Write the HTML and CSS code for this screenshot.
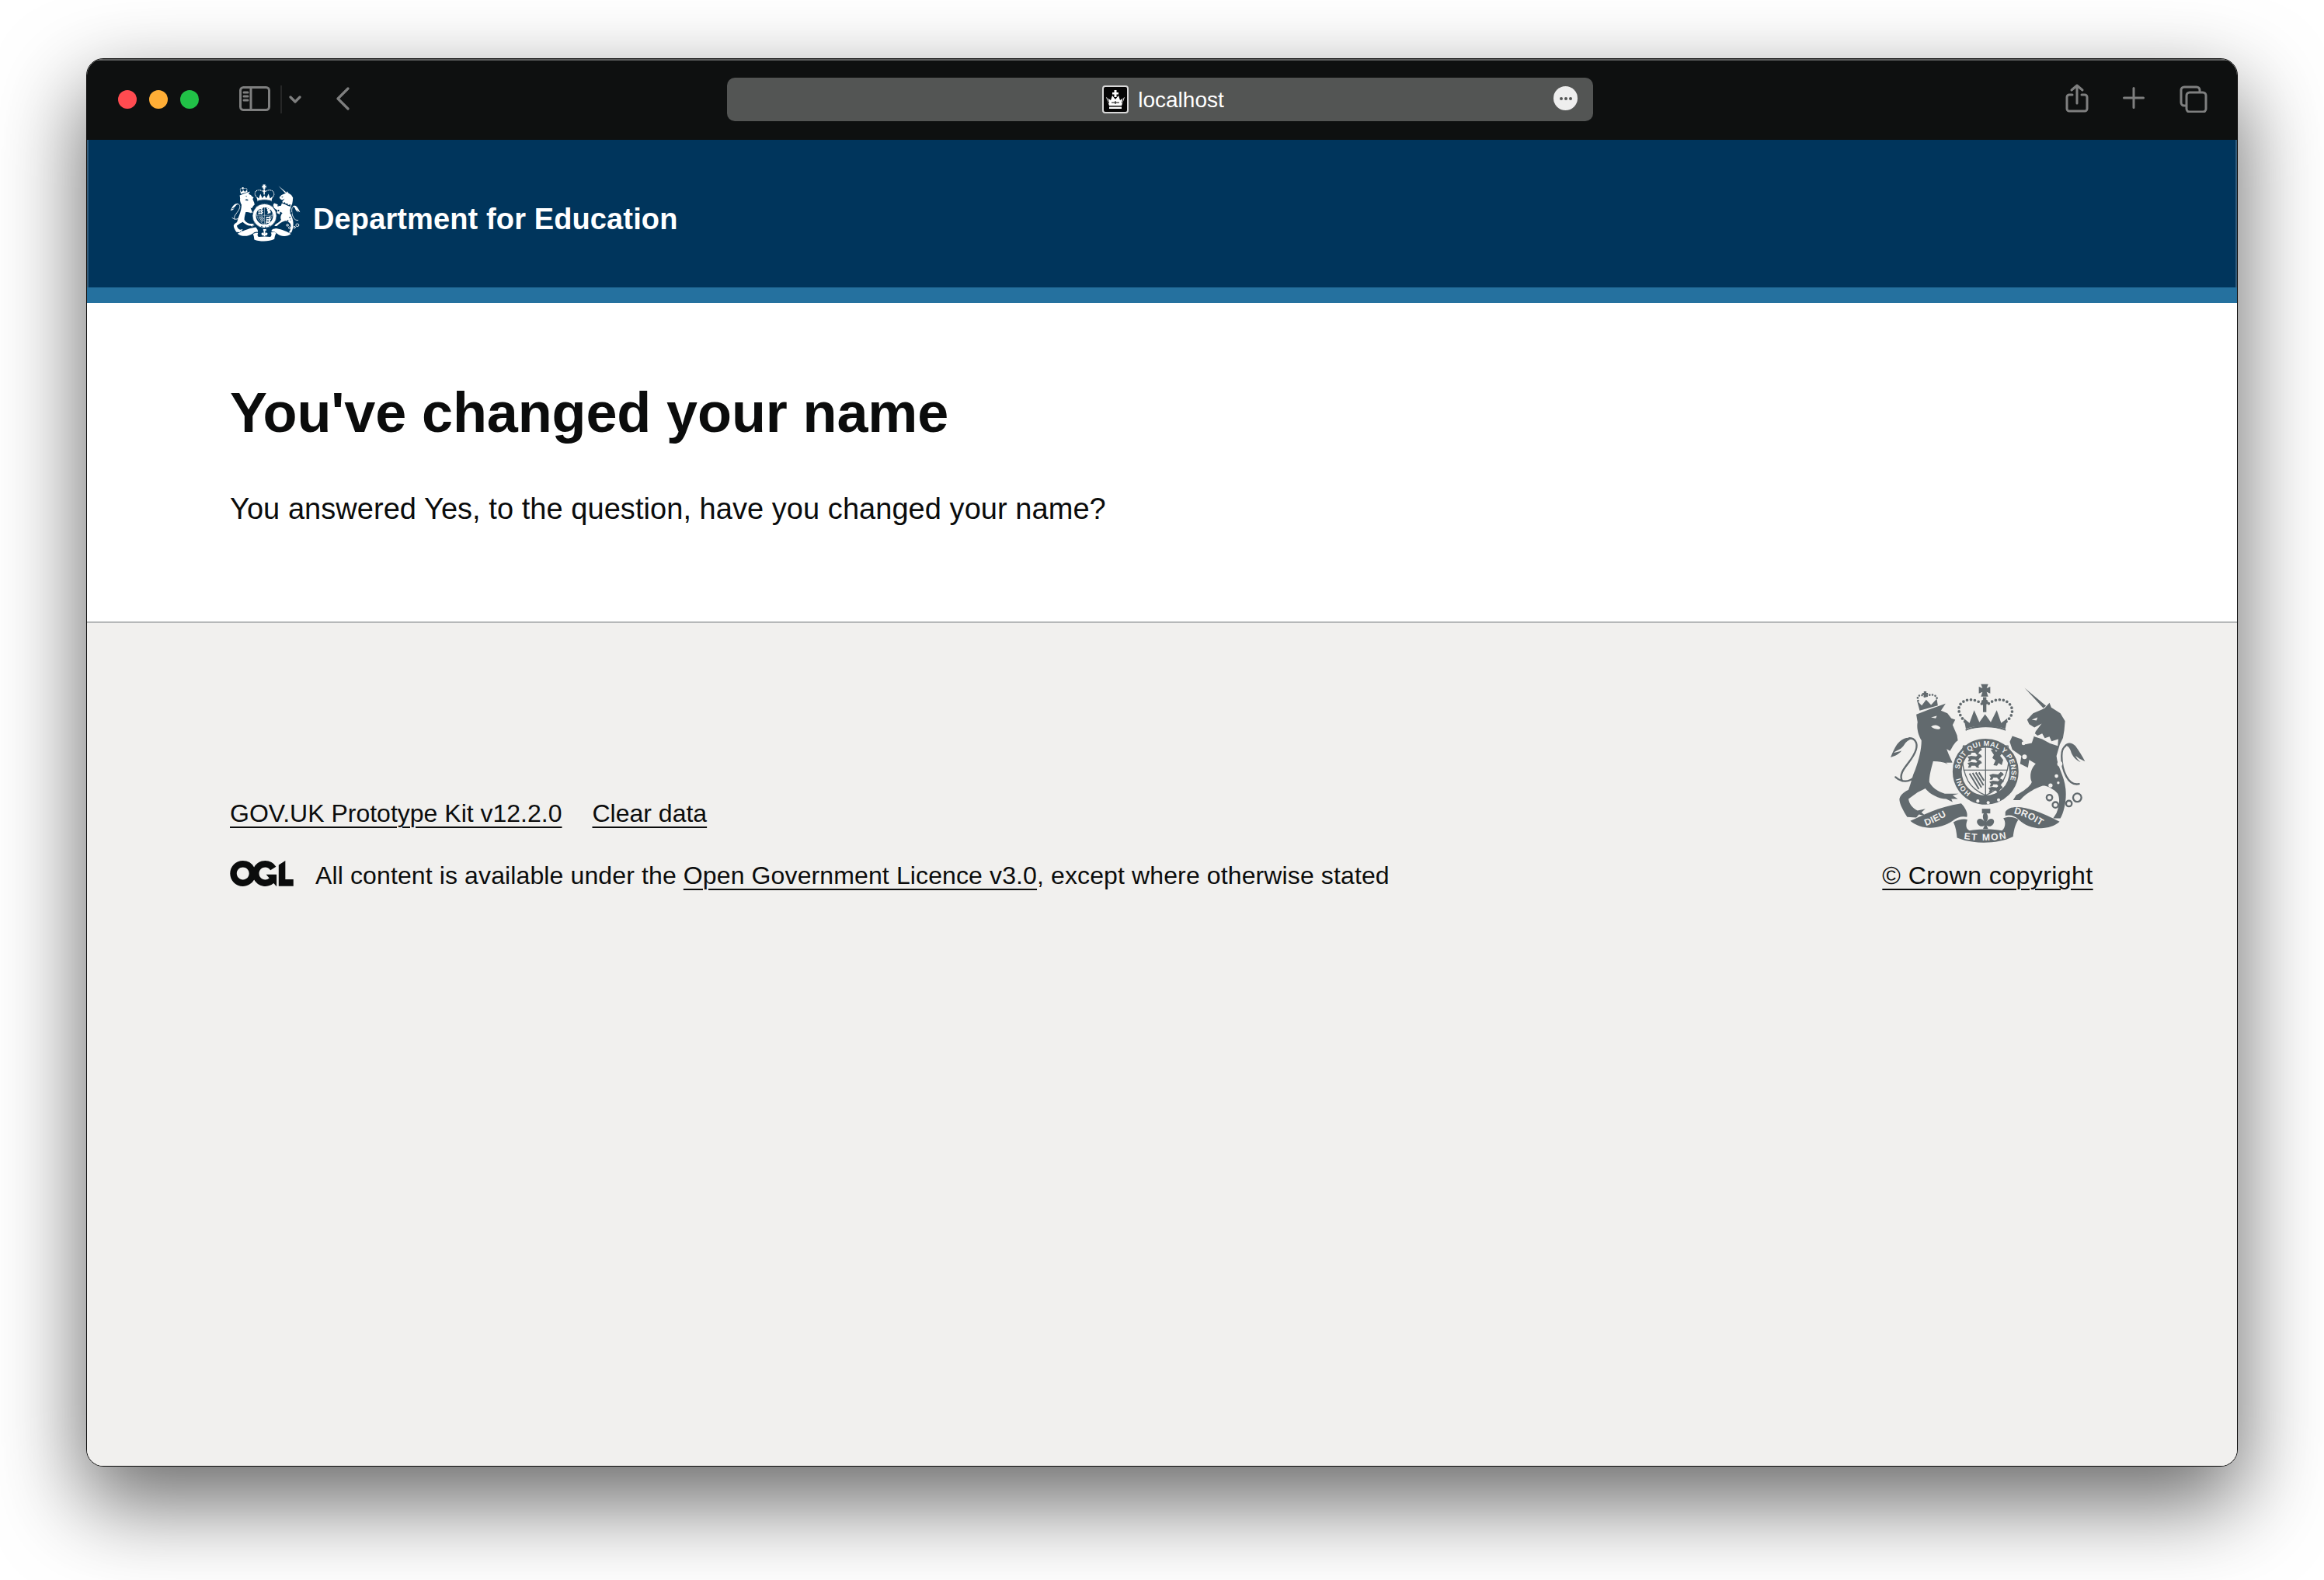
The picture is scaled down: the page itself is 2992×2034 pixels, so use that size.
FILE: index.html
```html
<!DOCTYPE html>
<html lang="en">
<head>
<meta charset="utf-8">
<title>You've changed your name</title>
<link rel="stylesheet" href="styles.css">
</head>
<body>
<svg class="defs" aria-hidden="true">
  <defs>
    <path id="arc-garter" d="M372 396 A100 100 0 1 1 522 492"/>
    <path id="arc-honi" d="M415 487 A100 100 0 0 1 373 422"/>
    <path id="arc-dieu" d="M242 614 C275 602 310 582 347 560"/>
    <path id="arc-et" d="M388 664 C440 672 505 672 555 662"/>
    <path id="arc-droit" d="M580 566 C620 575 660 595 700 624"/>
    <path id="passant" d="M0 6 L14 2 L34 4 L44 -6 L52 -2 L56 6 L48 10 L42 18 L46 24 L36 24 L30 16 L16 16 L12 24 L2 24 L6 14 Z"/>
    <symbol id="crest" viewBox="100 60 760 625">
      <g class="c-ink">
        <path d="M205 185 L255 165 L318 143 L300 170 L325 180 L340 200 L355 205 L345 225 L362 265 L365 285 C350 295 345 310 335 325 L322 318 C332 345 345 375 360 395 L378 420 L372 432 L350 425 L345 395 C330 375 315 365 270 365 C262 395 255 420 255 445 C265 465 285 480 315 490 L368 490 L345 497 L365 510 L340 510 L345 522 L320 510 C290 510 255 490 240 470 L210 485 L175 510 C178 530 190 545 210 555 L240 548 L225 562 L240 575 L215 570 L205 582 L170 580 C155 555 140 530 140 510 C145 490 165 480 175 475 C185 450 190 420 200 400 C215 360 225 320 225 285 C215 270 205 240 210 215 Z"/>
        <path d="M106 350 C118 322 128 300 142 288 C155 276 175 270 190 278 C175 282 165 290 158 302 C150 318 130 322 118 332 C130 330 140 328 148 324 C140 338 122 345 106 350 Z"/>
        <path d="M218 170 L208 132 L226 150 L243 128 L262 148 L284 124 L288 150 Z"/>
        <path d="M234 96 H244 V102 H250 V110 H244 V118 H234 V110 H228 V102 H234 Z"/>
        <path d="M622 82 L705 152 L694 160 Z"/>
        <path d="M700 160 L718 140 L725 158 L760 180 L778 210 L775 245 L770 275 L758 300 L745 345 C750 390 775 420 780 470 C785 510 775 560 760 585 L732 585 L745 565 C755 540 760 510 750 490 C735 470 700 455 690 460 C660 470 625 490 605 515 L578 515 L590 495 C620 480 645 460 650 445 C640 425 645 395 665 375 L640 360 L635 390 L605 375 L610 345 L575 320 L565 290 L575 268 L610 280 L625 300 L650 295 L665 250 L688 220 L660 235 L640 222 L632 205 L655 180 L690 165 Z"/>
        <path d="M855 366 C838 358 826 350 818 344 C825 356 830 362 838 368 C822 362 805 345 800 325 C795 310 785 302 775 306 C785 290 805 292 818 306 C830 322 845 345 855 366 Z"/>
        <path d="M454 68 H482 L476 84 L490 78 V104 L476 98 L482 116 H454 L460 98 L446 104 V78 L460 84 Z"/>
        <path d="M462 118 H475 V128 L481 132 V142 L475 146 V176 H462 V146 L456 142 V132 L462 128 Z"/>
        <path d="M388 200 L410 218 L428 168 L448 215 L470 184 L492 215 L515 168 L532 218 L556 200 L548 240 C510 225 430 225 396 240 Z"/>
      </g>
      <g class="c-line">
        <path class="c-dots" d="M392 212 C372 190 358 160 380 140 C405 118 445 128 466 152"/>
        <path class="c-dots" d="M552 212 C578 190 582 160 560 140 C535 118 495 128 474 152"/>
        <path class="c-dots c-dots-small" d="M212 132 C204 110 226 104 240 118 C256 102 290 108 284 130"/>
        <path d="M125 426 C150 448 178 446 202 424"/>
        <path d="M150 440 C132 400 190 370 204 320 C212 292 198 276 178 276"/>
        <path d="M832 452 C790 462 765 400 765 345 C765 325 770 312 780 306"/>
        <circle cx="718" cy="505" r="11"/>
        <circle cx="741" cy="533" r="11"/>
        <circle cx="793" cy="528" r="11"/>
        <circle cx="825" cy="505" r="16"/>
        <path d="M398 244 C440 226 505 226 546 244"/>
      </g>
      <g class="c-bg">
        <path d="M398 246 C440 232 505 232 546 246 L540 260 C500 248 445 248 405 260 Z"/>
        <circle cx="758" cy="375" r="10"/>
        <circle cx="722" cy="458" r="8"/>
        <circle cx="745" cy="422" r="7"/>
        <circle cx="752" cy="448" r="5"/>
        <circle cx="636" cy="265" r="10"/>
        <circle cx="622" cy="348" r="9"/>
        <circle cx="618" cy="296" r="7"/>
        <path d="M262 232 C272 222 290 224 298 236 C296 244 278 244 262 232 Z"/>
        <path d="M262 196 L284 190 L280 200 Z"/>
        <path d="M650 205 L672 196 L668 208 Z"/>
        <path d="M658 254 L672 266 L690 258 L700 276 L718 270 L726 288 L752 280 L750 306 L720 296 L690 280 L660 270 Z"/>
        <path d="M320 370 L360 370 L380 425 L345 420 C340 400 335 385 320 370 Z"/>
      </g>
      <circle class="c-ring" cx="472" cy="405" r="130"/>
      <g class="c-ink">
        <path d="M182 595 C225 575 290 540 378 527 C395 545 405 565 400 580 C385 575 360 580 345 595 C300 625 230 635 182 595 Z"/>
        <path d="M348 600 C365 590 390 585 402 590 C395 610 395 625 410 632 C450 625 500 625 535 632 C550 620 550 595 540 585 C560 575 585 580 598 590 C585 610 580 635 578 655 C520 685 420 685 362 660 C360 640 358 620 348 600 Z"/>
        <path d="M548 560 C570 525 650 540 757 598 C715 635 640 630 600 590 C585 575 565 570 548 575 Z"/>
        <path d="M458 548 H490 V566 H458 Z"/>
        <path d="M470 560 C486 572 482 590 474 600 C492 574 512 590 502 606 C495 618 482 618 476 612 L482 626 H462 L468 612 C462 618 448 618 441 606 C432 590 452 574 470 600 C462 590 456 572 470 560 Z"/>
      </g>
      <g class="c-bg">
        <circle cx="472" cy="405" r="92"/>
        <circle cx="442" cy="518" r="6"/>
        <circle cx="482" cy="524" r="6"/>
        <circle cx="522" cy="514" r="6"/>
      </g>
      <path class="c-cross" d="M472 306 V496 M386 399 H558 M386 306 H558 C566 350 560 400 540 440 C525 465 500 485 472 496 C444 485 419 465 404 440 C384 400 378 350 386 306 Z"/>
      <g class="c-ink">
        <use href="#passant" x="402" y="316"/>
        <use href="#passant" x="402" y="342"/>
        <use href="#passant" x="402" y="366"/>
        <use href="#passant" x="486" y="412"/>
        <use href="#passant" x="486" y="438"/>
        <use href="#passant" x="482" y="462" class="c-tiny"/>
        <path d="M492 322 L506 316 L512 328 L526 322 L536 334 L528 344 L540 360 L534 380 L522 372 L516 382 L502 380 L510 362 L498 352 L504 340 Z"/>
      </g>
      <path class="c-harp" d="M410 412 L446 472 M422 410 L456 466 M434 408 L464 458 M446 408 L466 440"/>
      <g class="c-text">
        <text class="c-garter"><textPath href="#arc-garter">SOIT QUI MAL Y PENSE</textPath></text>
        <text class="c-garter"><textPath href="#arc-honi">HONI</textPath></text>
        <text class="c-motto"><textPath href="#arc-dieu">DIEU</textPath></text>
        <text class="c-motto c-motto-wide"><textPath href="#arc-et">ET MON</textPath></text>
        <text class="c-motto"><textPath href="#arc-droit">DROIT</textPath></text>
      </g>
    </symbol>
  </defs>
</svg>

<div class="window">
  <div class="titlebar">
    <div class="tb-left">
      <span class="light light-red"></span>
      <span class="light light-yellow"></span>
      <span class="light light-green"></span>
      <svg class="tb-icon ic-sidebar" viewBox="0 0 40 32"><rect x="1.5" y="1.5" width="37" height="29" rx="4"/><path d="M15 2V30M6 8H11M6 13H11M6 18H11"/></svg>
      <span class="tb-sep"></span>
      <svg class="tb-icon ic-chevron" viewBox="0 0 16 12"><path d="M2 3L8 9L14 3"/></svg>
      <svg class="tb-icon ic-back" viewBox="0 0 18 30"><path d="M16 2L3 15L16 28"/></svg>
    </div>
    <div class="addressbar">
      <svg class="favicon" viewBox="0 0 34 36">
        <rect class="fav-box" x="1" y="1" width="32" height="34" rx="3"/>
        <path class="fav-crown" d="M9 26 L5 15 L11 19 L13 13 L17 18 L21 13 L23 19 L29 15 L25 26 Z"/>
        <path class="fav-crown" d="M15.500 6H18.500V9H21V11.500H18.500V15H15.500V11.500H13V9H15.500Z"/>
        <rect class="fav-crown" x="9" y="27.500" width="16" height="2.500"/>
        <path class="fav-dots" d="M7 16L8.500 23M17 20V24M27 16L25.500 23M12 22H22"/>
      </svg>
      <span class="address-text">localhost</span>
      <span class="addr-more"><i></i><i></i><i></i></span>
    </div>
    <div class="tb-right">
      <svg class="tb-icon ic-share" viewBox="0 0 30 37"><path d="M9 14H5A3 3 0 0 0 2 17V32A3 3 0 0 0 5 35H25A3 3 0 0 0 28 32V17A3 3 0 0 0 25 14H21M15 25V2M8 8L15 2L22 8"/></svg>
      <svg class="tb-icon ic-plus" viewBox="0 0 28 28"><path d="M14 1.500V26.500M1.500 14H26.500"/></svg>
      <svg class="tb-icon ic-tabs" viewBox="0 0 36 35"><path d="M8 26H6A4 4 0 0 1 2 22V6A4 4 0 0 1 6 2H22A4 4 0 0 1 26 6V8"/><rect x="9" y="9" width="25" height="25" rx="4"/></svg>
    </div>
  </div>

  <header class="site-header">
    <div class="container header-inner">
      <svg class="crest crest-small" aria-hidden="true"><use href="#crest"/></svg>
      <span class="org-name">Department for Education</span>
    </div>
  </header>

  <main class="content">
    <div class="container">
      <h1 class="page-title">You've changed your name</h1>
      <p class="body-text">You answered Yes, to the question, have you changed your name?</p>
    </div>
  </main>

  <footer class="site-footer">
    <div class="container footer-inner">
      <div class="footer-meta">
        <ul class="footer-links">
          <li><a href="#">GOV.UK Prototype Kit v12.2.0</a></li>
          <li><a href="#">Clear data</a></li>
        </ul>
        <div class="licence">
          <svg class="ogl" viewBox="0 0 483.2 195.7" aria-hidden="true"><path d="M421.5 142.8V.1l-50.7 32.3v161.1h112.4v-50.7zm-122.3-9.6A47.12 47.12 0 0 1 221 97.8c0-26 21.1-47.1 47.1-47.1 16.7 0 31.4 8.7 39.7 21.8l42.7-27.2A97.63 97.63 0 0 0 268.1 0c-36.5 0-68.3 20.1-85.1 49.7A98 98 0 0 0 97.8 0C43.9 0 0 43.9 0 97.8s43.9 97.8 97.8 97.8c36.5 0 68.3-20.1 85.1-49.7a97.76 97.76 0 0 0 149.6 25.4l19.4 22.2h3v-87.8h-80l24.3 27.5zM97.8 145c-26 0-47.1-21.1-47.1-47.1s21.1-47.1 47.1-47.1 47.2 21 47.2 47S123.800 145 97.8 145"/></svg>
          <span class="licence-text">All content is available under the <a href="#">Open Government Licence v3.0</a>, except where otherwise stated</span>
        </div>
      </div>
      <div class="footer-copyright">
        <svg class="crest crest-large" aria-hidden="true"><use href="#crest"/></svg>
        <a href="#">© Crown copyright</a>
      </div>
    </div>
  </footer>
</div>
</body>
</html>
```

FILE: styles.css
```css
* { box-sizing: border-box; }
html, body { margin: 0; height: 100%; }
body {
  width: 2992px;
  height: 2034px;
  padding: 75px 111px 146px;
  background: #fff;
  overflow: hidden;
  font-family: "Liberation Sans", Arial, sans-serif;
  color: #0b0c0c;
}
.defs { display: block; width: 0; height: 0; position: absolute; }

.window {
  width: 2770px;
  height: 1813px;
  display: flex;
  flex-direction: column;
  border: 1px solid #0a0a0a;
  border-radius: 22px;
  overflow: hidden;
  background: #f1f0ee;
  box-shadow: 0 44px 110px 4px rgba(0, 0, 0, 0.58);
}

/* browser chrome */
.titlebar {
  flex: 0 0 104px;
  display: grid;
  grid-template-columns: 824px 1115px 1fr;
  align-items: center;
  background: #0e1010;
  box-shadow: inset 0 2px 0 rgba(255, 255, 255, 0.32);
}
.tb-left { display: flex; align-items: center; padding-left: 40px; }
.light { width: 24px; height: 24px; border-radius: 50%; margin-right: 16px; }
.light-red { background: #ff4b50; }
.light-yellow { background: #ffae36; }
.light-green { background: #21c147; margin-right: 0; }
.tb-icon { display: block; fill: none; stroke: #7e7f7f; stroke-linecap: round; stroke-linejoin: round; }
.ic-sidebar { width: 40px; height: 32px; margin-left: 52px; stroke-width: 3; margin-top: -2px; }
.tb-sep { width: 2px; height: 36px; margin-left: 13px; background: #262727; }
.ic-chevron { width: 16px; height: 12px; margin-left: 9px; stroke-width: 3.2; }
.ic-back { width: 18px; height: 30px; margin-left: 44px; stroke-width: 3.2; margin-top: -2px; }
.addressbar {
  position: relative;
  height: 56px;
  display: flex;
  align-items: center;
  justify-content: center;
  gap: 12px;
  padding-left: 8px;
  border-radius: 10px;
  background: #535554;
  color: #fff;
}
.favicon { width: 34px; height: 36px; display: block; }
.fav-box { fill: #050505; stroke: #d8d8d8; stroke-width: 2; }
.fav-crown { fill: #fff; }
.fav-dots { fill: none; stroke: #050505; stroke-width: 1; }
.address-text { font-size: 28px; line-height: 36px; padding-top: 1px; }
.addr-more {
  position: absolute;
  right: 20px;
  top: 11px;
  width: 31px;
  height: 31px;
  display: flex;
  align-items: center;
  justify-content: center;
  gap: 2px;
  border-radius: 50%;
  background: #eeeeee;
}
.addr-more i { width: 4px; height: 4px; border-radius: 50%; background: #535554; }
.tb-right { display: flex; align-items: center; justify-content: flex-end; padding-right: 38px; }
.ic-share { width: 30px; height: 37px; stroke-width: 3; margin-top: -4px; }
.ic-plus { width: 28px; height: 28px; margin-left: 44px; stroke-width: 3; margin-top: -4px; }
.ic-tabs { width: 36px; height: 35px; margin-left: 45px; stroke-width: 3; margin-top: -2px; }

/* page */
.container { width: 2400px; margin: 0 auto; }

.site-header {
  flex: 0 0 210px;
  background: #00355c;
  border-bottom: 20px solid #25719f;
  color: #fff;
  box-shadow: inset 2px 0 0 rgba(255, 255, 255, 0.2), inset -2px 0 0 rgba(255, 255, 255, 0.2);
  display: flex;
  align-items: center;
}
.header-inner { display: flex; align-items: center; gap: 16px; }
.org-name { font-size: 38px; font-weight: 700; line-height: 44px; letter-spacing: 0.12px; padding-top: 14px; }

.crest { display: block; color: inherit; }
.crest-small { width: 91px; height: 76px; --crest-bg: #00355c; --crest-text: #fff; margin-top: -3px; }
.crest-large { width: 254px; height: 209px; color: #626a6e; --crest-bg: #f1f0ee; --crest-text: #f1f0ee; margin: 0 auto 20px; }
.c-ink { fill: currentColor; }
.c-bg { fill: var(--crest-bg); }
.c-ring { fill: currentColor; stroke: var(--crest-bg); stroke-width: 6; }
.c-line { fill: none; stroke: currentColor; stroke-width: 7; stroke-linecap: round; }
.c-dots { stroke-width: 11; stroke-dasharray: 0 15; }
.c-dots-small { stroke-width: 8; stroke-dasharray: 0 11; }
.c-cross { fill: none; stroke: currentColor; stroke-width: 4; }
.c-harp { fill: none; stroke: currentColor; stroke-width: 6; }
.c-text { fill: var(--crest-text); font-family: "Liberation Sans", Arial, sans-serif; font-weight: 700; }
.c-garter { font-size: 27px; letter-spacing: 1.5px; }
.c-motto { font-size: 36px; letter-spacing: 1px; }
.c-motto-wide { letter-spacing: 5px; }

.content { flex: 0 0 410px; background: #fff; padding-top: 101px; }
.page-title { margin: 0 0 59px; font-size: 72px; line-height: 80px; font-weight: 700; letter-spacing: -0.12px; }
.body-text { margin: 0; font-size: 38px; line-height: 50px; letter-spacing: 0.05px; }

.site-footer {
  flex: 1 1 auto;
  background: #f1f0ee;
  border-top: 2px solid #b6b8b9;
  padding-top: 76px;
}
.footer-inner { display: flex; justify-content: space-between; align-items: flex-end; font-size: 32px; line-height: 40px; }
.footer-inner a { color: inherit; text-decoration: underline; text-decoration-thickness: 2px; text-underline-offset: 6px; }
.footer-links { display: flex; gap: 39px; margin: 0 0 40px; padding: 0; list-style: none; }
.licence { display: flex; align-items: center; gap: 28px; }
.licence-text { letter-spacing: 0.12px; }
.ogl { display: block; width: 82px; height: 33px; fill: #0b0c0c; margin-top: -6px; }
.footer-copyright { width: 274px; text-align: center; white-space: nowrap; letter-spacing: 0.45px; }
```
